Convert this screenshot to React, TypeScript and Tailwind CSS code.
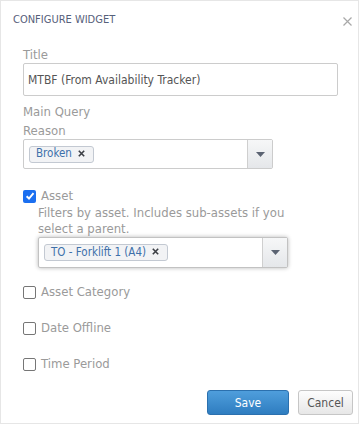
import React from "react";

const font = { fontFamily: '"DejaVu Sans Condensed", "Liberation Sans", Arial, sans-serif' };

function Caret() {
  return (
    <svg width="9" height="5" viewBox="0 0 9 5">
      <path d="M0 0 L9 0 L4.5 5 Z" fill="#5b6372" />
    </svg>
  );
}

function Tag({ label }: { label: string }) {
  return (
    <span className="flex h-[17px] items-center rounded-[3px] border border-[#c3c9d2] bg-[#f2f3f5] pl-[6px] pr-[8px] text-[11.5px] leading-none text-[#3d70aa]">
      {label}
      <svg width="7" height="7" viewBox="0 0 7 7" className="ml-[6px] mb-[2px]">
        <path d="M0.8 0.8 L6.2 6.2 M6.2 0.8 L0.8 6.2" stroke="#3c3f45" strokeWidth="1.6" />
      </svg>
    </span>
  );
}

function Select({ label, shadow }: { label: string; shadow?: boolean }) {
  return (
    <div
      className={
        "flex h-full w-[250px] items-stretch rounded-[2px] border bg-white " +
        (shadow ? "border-[#c2c2c2] shadow-[0_0_4px_rgba(0,0,0,0.28)]" : "border-[#cccccc]")
      }
    >
      <div className="flex flex-1 items-center pl-[5px]">
        <Tag label={label} />
      </div>
      <div className="flex w-[25px] items-center justify-center border-l border-[#cfcfcf] bg-gradient-to-b from-[#f6f7f8] to-[#e5e7ea]">
        <Caret />
      </div>
    </div>
  );
}

function Check({ checked }: { checked?: boolean }) {
  if (checked)
    return (
      <span className="flex h-[13px] w-[13px] items-center justify-center rounded-[2px] bg-[#1b6ff0]">
        <svg width="10" height="10" viewBox="0 0 10 10">
          <path d="M1.6 5.2 L4 7.5 L8.5 2.2" stroke="white" strokeWidth="1.9" fill="none" />
        </svg>
      </span>
    );
  return <span className="h-[13px] w-[13px] rounded-[2px] border border-[#767676] bg-white" />;
}

function CheckRow({ label, checked }: { label: string; checked?: boolean }) {
  return (
    <div className="flex h-[16px] items-center gap-[5px] text-[13px] leading-[16px] text-[#9a9a9a]">
      <Check checked={checked} />
      <span>{label}</span>
    </div>
  );
}

export default function App() {
  return (
    <div style={font} className="h-[424px] w-[359px] border border-[#e6e6e6] bg-white">
      <div className="flex h-[39px] items-center justify-between pl-[12px] pr-[6px]">
        <span className="text-[11px] text-[#56607a]">CONFIGURE WIDGET</span>
        <svg width="9" height="9" viewBox="0 0 9 9" className="mt-[1px]">
          <path d="M0.5 0.5 L8.5 8.5 M8.5 0.5 L0.5 8.5" stroke="#a8a8a8" strokeWidth="1.2" />
        </svg>
      </div>
      <div className="flex flex-col pl-[22px] pt-[7px]">
        <div className="h-[16px] text-[13px] leading-[16px] text-[#9a9a9a]">Title</div>
        <div className="flex h-[33px] w-[315px] items-center rounded-[2px] border border-[#cccccc] pl-[4px] text-[12px] text-[#555555]">
          MTBF (From Availability Tracker)
        </div>
        <div className="mt-[8px] h-[16px] text-[13px] leading-[16px] text-[#9a9a9a]">Main Query</div>
        <div className="mt-[3px] h-[16px] text-[13px] leading-[16px] text-[#9a9a9a]">Reason</div>
        <div className="h-[30px]">
          <Select label="Broken" />
        </div>
        <div className="mt-[19px]">
          <CheckRow label="Asset" checked />
        </div>
        <div className="ml-[15px] mt-[1px] w-[252px] text-[13px] leading-[16px] text-[#9a9a9a]">
          Filters by asset. Includes sub-assets if you select a parent.
        </div>
        <div className="ml-[15px] h-[31px]">
          <Select label="TO - Forklift 1 (A4)" shadow />
        </div>
        <div className="mt-[16px] flex flex-col gap-[20px]">
          <CheckRow label="Asset Category" />
          <CheckRow label="Date Offline" />
          <CheckRow label="Time Period" />
        </div>
      </div>
      <div className="mt-[18px] flex justify-end gap-[9px] pr-[5px]">
        <button className="h-[25px] w-[82px] rounded-[3px] border border-[#2b70ae] bg-gradient-to-b from-[#4f9edc] to-[#2e7dc0] text-[12px] text-white">
          Save
        </button>
        <button className="h-[25px] w-[55px] rounded-[3px] border border-[#c6c6c6] bg-gradient-to-b from-[#fdfdfd] to-[#e7e7e7] text-[12px] text-[#555555]">
          Cancel
        </button>
      </div>
    </div>
  );
}
